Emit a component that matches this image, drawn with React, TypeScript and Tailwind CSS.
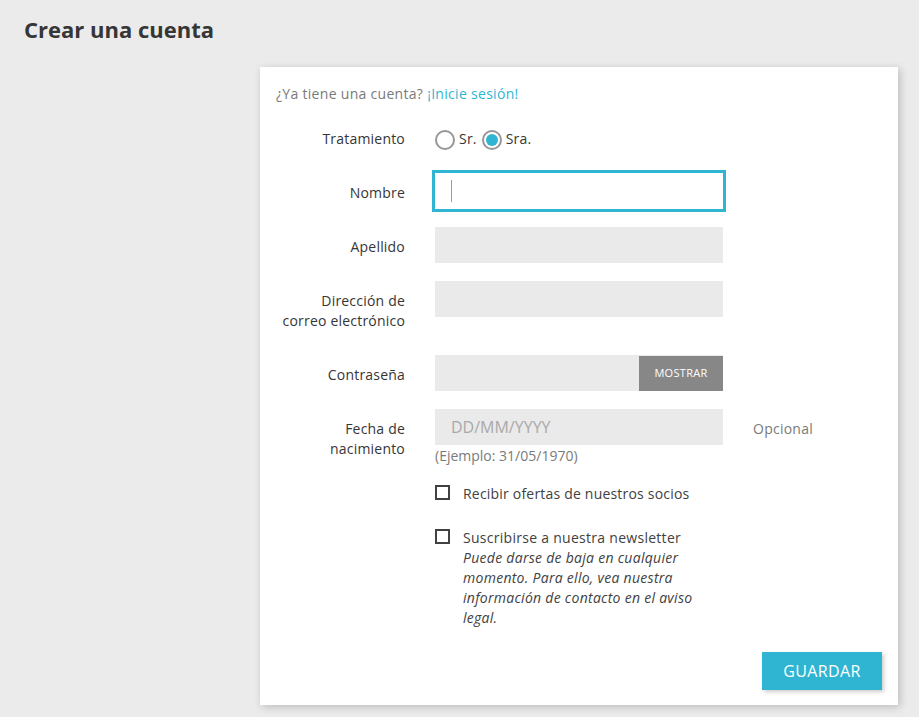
import React from "react";

const font = { fontFamily: '"Open Sans", "Noto Sans", sans-serif' };

function Row({ label, children, extra, className = "" }: { label: React.ReactNode; children: React.ReactNode; extra?: React.ReactNode; className?: string }) {
  return (
    <div className={`flex items-start ${className}`}>
      <div className="w-[129px] shrink-0 text-right text-[14px] leading-[20px] tracking-[0.2px] text-[#363636] pt-[10px] pb-[6px]">{label}</div>
      <div className="ml-[30px] w-[288px] shrink-0">{children}</div>
      {extra ? <div className="ml-[30px] pt-[10px] text-[14px] leading-[20px] tracking-[0.25px] text-[#7a7a7a]">{extra}</div> : null}
    </div>
  );
}

function Radio({ checked, label }: { checked?: boolean; label: string }) {
  return (
    <label className="flex items-center">
      <span className="w-5 h-5 rounded-full border-2 border-[#979797] bg-white flex items-center justify-center">
        {checked ? <span className="w-3 h-3 rounded-full bg-[#2fb5d2]" /> : null}
      </span>
      <span className="ml-1 text-[14px] leading-[20px] tracking-[0.2px] text-[#363636] -mt-0.5">{label}</span>
    </label>
  );
}

export default function App() {
  return (
    <div className="min-h-screen bg-[#ebebeb]" style={font}>
      <h1 className="pl-6 pt-[14px] text-[22px] leading-[30px] font-bold text-[#363636]">Crear una cuenta</h1>
      <div className="ml-[260px] mt-[23px] w-[638px] bg-white px-4 pt-4 pb-[15px] shadow-[2px_2px_8px_0_rgba(0,0,0,0.2)]">
        <p className="text-[14px] leading-[20px] tracking-[0.3px] text-[#7a7a7a] mt-px">
          ¿Ya tiene una cuenta? <a className="text-[#2fb5d2]">¡Inicie sesión!</a>
        </p>

        <div className="mt-[17px] flex items-center h-9 mb-4">
          <div className="w-[129px] shrink-0 text-right text-[14px] leading-[20px] tracking-[0.2px] text-[#363636]">Tratamiento</div>
          <div className="ml-[30px] flex items-center gap-[5px] mt-0.5">
            <Radio label="Sr." />
            <Radio label="Sra." checked />
          </div>
        </div>

        <Row label="Nombre" className="mb-[18px]">
          <div className="relative h-9 bg-white outline-[3px] outline-solid outline-[#2fb5d2]">
            <span className="absolute left-4 top-[7px] w-px h-[22px] bg-[#9a9a9a]" />
          </div>
        </Row>

        <Row label="Apellido" className="mb-[18px]">
          <div className="h-9 bg-[#eaeaea]" />
        </Row>

        <Row label={<>Dirección de<br />correo electrónico</>} className="mb-[18px]">
          <div className="h-9 bg-[#eaeaea]" />
        </Row>

        <Row label="Contraseña" className="mb-[18px]">
          <div className="flex h-9 bg-[#eaeaea]">
            <div className="flex-1" />
            <div className="w-[84px] mt-px bg-[#878787] text-white text-[11px] tracking-[0.3px] flex items-center justify-center uppercase">Mostrar</div>
          </div>
        </Row>

        <Row label={<>Fecha de<br />nacimiento</>} extra="Opcional" className="mb-[18px]">
          <div className="h-9 bg-[#eaeaea] pl-4 flex items-center text-[16px] text-[#a9a9a9]">DD/MM/YYYY</div>
          <div className="mt-px text-[14px] leading-[20px] text-[#7a7a7a]">(Ejemplo: 31/05/1970)</div>
        </Row>

        <div className="flex">
          <div className="w-[129px] shrink-0" />
          <div className="ml-[30px] w-[288px]">
            <div className="flex items-start">
              <span className="mt-[1px] w-[15px] h-[15px] border-2 border-[#414141] shrink-0" />
              <span className="ml-[13px] text-[14px] leading-[20px] tracking-[0.2px] text-[#414141]">Recibir ofertas de nuestros socios</span>
            </div>
            <div className="flex items-start mt-[24px]">
              <span className="mt-[1px] w-[15px] h-[15px] border-2 border-[#414141] shrink-0" />
              <div className="ml-[13px] w-[260px] text-[14px] leading-[20px] tracking-[0.28px] text-[#414141]">
                <div>Suscribirse a nuestra newsletter</div>
                <div className="italic">Puede darse de baja en cualquier momento. Para ello, vea nuestra información de contacto en el aviso legal.</div>
              </div>
            </div>
          </div>
        </div>

        <div className="flex justify-end mt-6">
          <button className="w-[120px] h-[38px] bg-[#2fb5d2] text-white text-[16px] tracking-[0.4px] uppercase shadow-[2px_2px_4px_0_rgba(0,0,0,0.2)]">Guardar</button>
        </div>
      </div>
    </div>
  );
}
